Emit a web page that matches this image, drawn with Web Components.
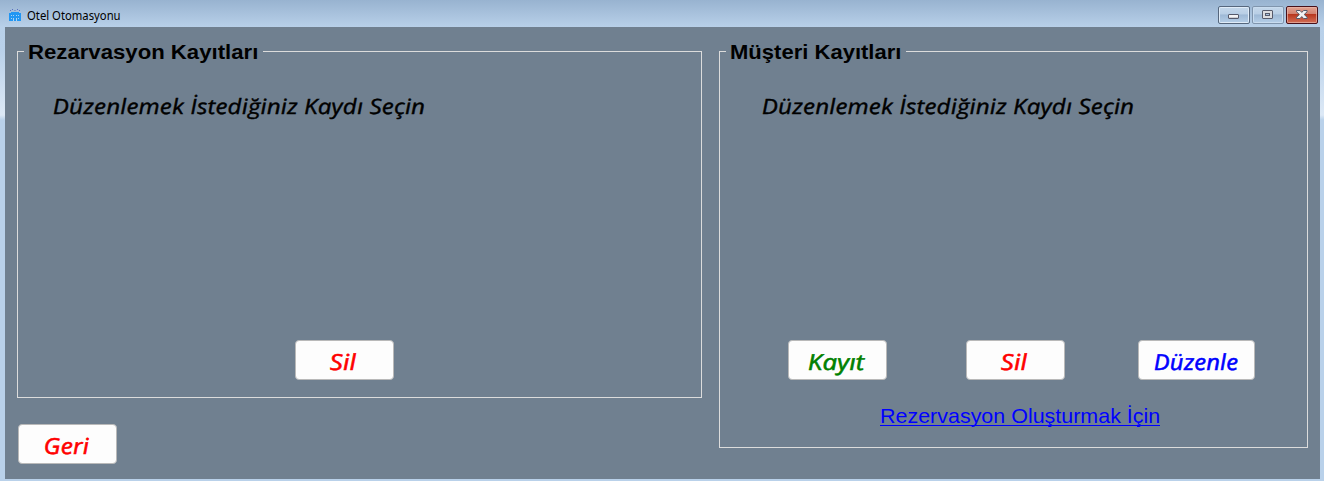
<!DOCTYPE html>
<html lang="tr"><head><meta charset="utf-8"><title>Otel Otomasyonu</title>
<style>html,body{margin:0;width:1324px;height:481px;overflow:hidden;background:#b9d1ea}</style></head>
<body><hotel-window></hotel-window>
<script>
const define=(name,html,setup)=>customElements.define(name,class extends HTMLElement{
 connectedCallback(){ if(this.shadowRoot)return; this.attachShadow({mode:'open'}).innerHTML=html; if(setup)setup(this);}
});

// Text stretched horizontally to a fixed width; --lean straightens an italic face
define('fit-text','<style>:host{display:inline-block;white-space:pre}span{display:inline-block;transform-origin:0 75%}</style><span></span>',el=>{
 const s=el.shadowRoot.querySelector('span');s.textContent=el.getAttribute('text');
 const w=+el.getAttribute('w');
 el.style.width=w+'px';
 s.style.transform='skewX(var(--lean,0deg)) scaleX('+w/s.offsetWidth+')';
});

define('caption-controls',`<style>:host{display:block;width:100px;height:18px}svg{display:block}</style>
<svg width="100" height="18" viewBox="0 0 100 18">
<defs><linearGradient id="b" x1="0" y1="0" x2="0" y2="1"><stop offset="0" stop-color="#c5d8eb"/><stop offset=".46" stop-color="#b8cee5"/><stop offset=".48" stop-color="#9db8d5"/><stop offset="1" stop-color="#b7d0e9"/></linearGradient>
<linearGradient id="r" x1="0" y1="0" x2="0" y2="1"><stop offset="0" stop-color="#e4a594"/><stop offset=".45" stop-color="#d07f6e"/><stop offset=".47" stop-color="#b8371f"/><stop offset="1" stop-color="#d4735b"/></linearGradient></defs>
<rect x=".5" y=".5" width="31" height="17" rx="1.5" fill="url(#b)" stroke="#56677d"/><rect x="1.5" y="1.5" width="29" height="15" rx="1" fill="none" stroke="#e0ecf8"/>
<rect x="10.5" y="8.5" width="10" height="4" rx=".5" fill="#f3f3f5" stroke="#565a6b"/><path d="M11 11.5h9" stroke="#cfcfd4"/>
<rect x="34.5" y=".5" width="31" height="17" rx="1.5" fill="url(#b)" stroke="#8095ad"/><rect x="35.5" y="1.5" width="29" height="15" rx="1" fill="none" stroke="#c9dcef"/>
<rect x="44.5" y="4.5" width="10" height="8" rx=".5" fill="#dcdcdf" stroke="#565a6b"/><rect x="47.5" y="7.5" width="4" height="2" fill="#a9c2de" stroke="#565a6b"/>
<rect x="68.5" y=".5" width="31" height="17" rx="1.5" fill="url(#r)" stroke="#47101a"/><rect x="69.5" y="1.5" width="29" height="15" rx="1" fill="none" stroke="#e9b5a8" stroke-opacity=".7"/>
<path d="M78.5 4.5h3.500l1.800 1.900 1.800-1.900h3.500v1.300l-2.900 2.700 2.900 2.700v1.300h-3.500l-1.800-1.900-1.800 1.900h-3.500v-1.300l2.900-2.700-2.900-2.700z" fill="#f2f2f3" stroke="#565a6b" stroke-width="1"/>
</svg>`);

define('title-bar',`<style>:host{display:flex;height:27px;box-sizing:border-box;padding:0 6px 0 9px;background:linear-gradient(#98b3d0,#b8d0e9);font:12px/14px "Noto Sans","Open Sans",sans-serif;color:#000}
svg{flex:none;margin:9px 6px 0 0}fit-text{margin-top:9px;flex:1}caption-controls{margin-top:6px}</style>
<svg width="12" height="12" viewBox="0 0 12 12"><g fill="#5a6fc0"><rect x="1" y="1" width="1" height="1"/><rect x="3" y="0" width="1" height="1"/><rect x="5.500" y="1" width="1" height="1"/><rect x="8" y="0" width="1" height="1"/><rect x="10" y="1" width="1" height="1"/></g>
<path d="M2 3h8v1h2v8H0V4h2z" fill="#2196f3"/><path d="M2 6h1v1H2zM4 6h1v1H4zM7 6h1v1H7zM9 6h1v1H9zM2 9h1v1H2zM4 9h1v3H4zM7 9h1v3H7zM9 9h1v1H9z" fill="#a9d2f5"/></svg>
<fit-text text="Otel Otomasyonu" w="94"></fit-text><caption-controls></caption-controls>`);

define('group-box',`<style>:host{display:block;box-sizing:border-box;border:1px solid #dcdcdc}
header{display:flex;height:24px;margin-top:-13px;padding-left:6px;font:bold 21px/26px "Liberation Sans",Arial,sans-serif;color:#000}
header fit-text{background:#708090;padding:0 5px 0 4px;height:24px}</style><header></header><slot></slot>`,el=>{
 el.shadowRoot.querySelector('header').innerHTML=`<fit-text text="${el.getAttribute('caption')}" w="${el.getAttribute('w')}"></fit-text>`;
});

define('action-button',`<style>:host{display:flex;box-sizing:border-box;width:99px;height:40px;border:1px solid #b9b9b9;border-radius:4px;background:#fdfdfd;padding-top:6px;font:italic 400 22px/29px "Open Sans","Noto Sans",sans-serif;-webkit-text-stroke:.55px currentColor;--lean:3deg}</style><slot></slot>`);

define('hotel-window',`<style>:host{display:block;width:1324px;height:481px;background:linear-gradient(#b8d0e9 27px,#b9d1ea 50px,#dde9f6 115px,#b9d1ea 120px)}
main{display:grid;grid-template-columns:685px 589px;column-gap:17px;align-items:start;box-sizing:border-box;width:1315px;height:452px;margin-left:5px;padding:24px 0 0 12px;background:#708090}
.left{display:block}.hint{display:block;margin-left:35px;margin-top:29px;font:italic 400 21px/28px "Open Sans","Noto Sans",sans-serif;color:#000;-webkit-text-stroke:.4px #000;--lean:3deg}
.right .hint{margin-left:42px}.row{display:flex;margin-top:220px}
.left group-box{height:347px}.left .row{padding-left:277px}.right{height:397px}.right .row{padding-left:68px}
.back{margin:26px 0 0 1px}
.link{display:block;margin:22px 0 0 160px;font:21px/28px "Liberation Sans",Arial,sans-serif;color:#00f;text-decoration:none}
.link{width:280px;height:25px;white-space:nowrap}.link fit-text{height:23px;border-bottom:1px solid #00f}</style>
<title-bar></title-bar><main>
<div class="left"><group-box caption="Rezarvasyon Kayıtları" w="230"><div class="hint"><fit-text text="Düzenlemek İstediğiniz Kaydı Seçin" w="372"></fit-text></div>
<div class="row"><action-button style="color:#f00"><fit-text text="Sil" w="26" style="margin-left:34px"></fit-text></action-button></div></group-box>
<action-button class="back" style="color:#f00"><fit-text text="Geri" w="45" style="margin-left:25px"></fit-text></action-button></div>
<group-box class="right" caption="Müşteri Kayıtları" w="171"><div class="hint"><fit-text text="Düzenlemek İstediğiniz Kaydı Seçin" w="372"></fit-text></div>
<div class="row"><action-button style="color:#008000"><fit-text text="Kayıt" w="57" style="margin-left:19px"></fit-text></action-button>
<action-button style="color:#f00;margin-left:79px"><fit-text text="Sil" w="26" style="margin-left:34px"></fit-text></action-button>
<action-button style="color:#00f;margin-left:73px;width:117px"><fit-text text="Düzenle" w="84" style="margin-left:15px"></fit-text></action-button></div>
<a class="link" href="#"><fit-text text="Rezervasyon Oluşturmak İçin" w="280"></fit-text></a></group-box></main>`);
</script></body></html>
